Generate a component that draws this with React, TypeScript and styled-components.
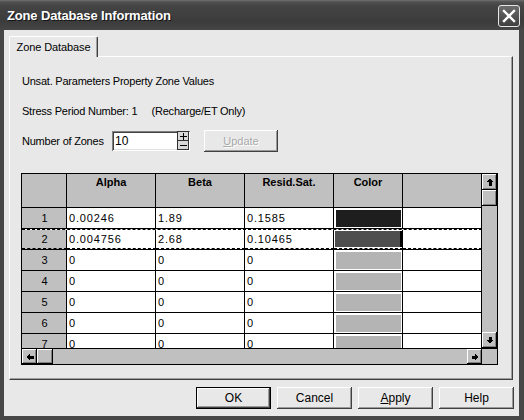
import React from "react";
import styled, { createGlobalStyle, css } from "styled-components";

const GlobalStyle = createGlobalStyle`
  html, body { margin: 0; padding: 0; background: #e8e8e8; }
  body { font-family: "Liberation Sans", Arial, sans-serif; font-size: 11px; color: #000; }
  * { box-sizing: border-box; }
`;

const Window = styled.div`
  width: 524px;
  height: 420px;
  display: flex;
  flex-direction: column;
  background: #e8e8e8;
  overflow: hidden;
`;

const TitleBar = styled.div`
  height: 30px;
  flex: none;
  display: flex;
  align-items: center;
  justify-content: space-between;
  padding: 0 4px 0 7px;
  background: linear-gradient(#707070 0, #505050 2px, #444 6px, #3c3c3c 22px, #464646 30px);
`;

const Title = styled.div`
  color: #fff;
  font-family: "Liberation Sans", Arial, sans-serif;
  font-weight: bold;
  font-size: 13px;
  letter-spacing: -0.15px;
  text-shadow: 1px 1px 0 #151515;
  margin-top: 1px;
`;

const CloseButton = styled.div`
  width: 22px;
  height: 22px;
  border: 1px solid #e6e6e6;
  border-radius: 3px;
  background: linear-gradient(#6c6c6c, #3e3e3e);
  display: flex;
  align-items: center;
  justify-content: center;
  margin-top: 2px;
`;

const Body = styled.div`
  flex: 1;
  display: flex;
  flex-direction: column;
  border-left: 4px solid #474747;
  border-right: 5px solid #474747;
  border-bottom: 4px solid #474747;
  padding: 6px 5px 0 5px;
`;

const TabStrip = styled.div`
  display: flex;
  height: 21px;
  position: relative;
  z-index: 1;
  margin-bottom: -1px;
`;

const Tab = styled.div`
  width: 89px;
  height: 21px;
  display: flex;
  align-items: center;
  justify-content: center;
  padding-bottom: 1px;
  background: #e8e8e8;
  border-top: 1px solid #fff;
  border-left: 1px solid #fff;
  border-right: 1px solid #404040;
  box-shadow: inset -1px 0 #a0a0a0;
  border-radius: 2px 2px 0 0;
  letter-spacing: -0.1px;
`;

const Panel = styled.div`
  width: 504px;
  height: 324px;
  border-top: 1px solid #fff;
  border-left: 1px solid #fff;
  border-right: 1px solid #404040;
  border-bottom: 1px solid #404040;
  box-shadow: inset -1px -1px #a0a0a0;
  padding: 18px 11px 0 11px;
  display: flex;
  flex-direction: column;
`;

const Line = styled.div<{ $gap: number }>`
  line-height: 13px;
  height: 13px;
  margin-top: ${(p) => p.$gap}px;
  padding-left: 1px;
  white-space: pre;
  letter-spacing: -0.22px;
`;

const ControlRow = styled.div`
  display: flex;
  align-items: center;
  height: 22px;
  margin-top: 12px;
`;

const Label = styled.div`
  width: 91px;
  padding-left: 1px;
  letter-spacing: -0.22px;
`;

const SpinBox = styled.div`
  width: 78px;
  height: 20px;
  background: #fff;
  display: flex;
  align-items: center;
  box-shadow: inset 1px 1px #808080, inset -1px -1px #fff, inset 2px 2px #404040, inset -2px -2px #e0e0e0;
  padding: 2px 1px 2px 3px;
`;

const SpinValue = styled.div`
  flex: 1;
  font-size: 12px;
`;

const SpinButtons = styled.div`
  display: flex;
  flex-direction: column;
  width: 12px;
  height: 19px;
  margin-top: -1px;
`;

const SpinBtn = styled.div`
  flex: 1;
  background: #d8d8d8;
  border: 1px solid #303030;
  display: flex;
  align-items: center;
  justify-content: center;
  & + & { border-top: none; }
`;

const raised = css`
  box-shadow: inset -1px -1px #404040, inset 1px 1px #fff, inset -2px -2px #9a9a9a;
`;

const UpdateButton = styled.div`
  width: 74px;
  height: 22px;
  margin-left: 14px;
  display: flex;
  align-items: center;
  justify-content: center;
  color: #a8a8a8;
  text-shadow: 1px 1px 0 #fff;
  background: #e8e8e8;
  ${raised}
  u { text-decoration: underline; }
`;

const GridFrame = styled.div`
  margin-top: 21px;
  width: 477px;
  height: 192px;
  border: 1px solid #000;
  display: grid;
  grid-template-columns: 460px 15px;
  grid-template-rows: 174px 16px;
  background: #c0c0c0;
`;

const Cells = styled.div`
  overflow: hidden;
  background: #fff;
`;

const HeaderRow = styled.div`
  display: flex;
  height: 34px;
  border-bottom: 1px solid #000;
  background: #c0c0c0;
`;

const HeadCell = styled.div<{ $w: number }>`
  width: ${(p) => p.$w}px;
  flex: none;
  border-right: 1px solid #000;
  font-weight: bold;
  text-align: center;
  padding-top: 2px;
  line-height: 13px;
`;

const DataRow = styled.div<{ $focused?: boolean }>`
  display: flex;
  height: 21px;
  border-bottom: 1px solid #000;
  background: #fff;
  ${(p) => p.$focused && css`border-top: 1px dashed #000;`}
`;

const Cell = styled.div<{ $w: number; $head?: boolean; $focused?: boolean }>`
  width: ${(p) => p.$w}px;
  flex: none;
  border-right: 1px solid #000;
  display: flex;
  align-items: center;
  padding-left: 2px;
  font-size: 11px;
  letter-spacing: 0.85px;
  background: ${(p) => (p.$head ? "#c0c0c0" : "#fff")};
  ${(p) => p.$head && css`justify-content: center; padding-left: 1px; letter-spacing: 0;`}
  ${(p) => p.$focused && css`border-bottom: 1px dashed #000;`}
`;

const ColorCell = styled.div<{ $w: number; $focused?: boolean }>`
  width: ${(p) => p.$w}px;
  flex: none;
  border-right: 1px solid #000;
  background: #fff;
  padding: 2px 1px 1px 2px;
  display: flex;
  ${(p) => p.$focused && css`border-bottom: 1px dashed #000; padding: 1px 0 1px 1px;`}
`;

const Swatch = styled.div<{ $c: string; $sel?: boolean }>`
  flex: 1;
  background: ${(p) => p.$c};
  ${(p) => p.$sel && css`border-right: 2px solid #000;`}
`;

const VScroll = styled.div`
  display: flex;
  flex-direction: column;
  justify-content: space-between;
  background: #c0c0c0;
`;

const HScroll = styled.div`
  display: flex;
  background: #c0c0c0;
  border-top: 1px solid #000;
`;

const Corner = styled.div`
  background: #c0c0c0;
  border-top: 1px solid #000;
`;

const SBtn = styled.div<{ $h?: number; $w?: number }>`
  width: ${(p) => p.$w ?? 15}px;
  height: ${(p) => p.$h ?? 16}px;
  flex: none;
  background: #c0c0c0;
  display: flex;
  align-items: center;
  justify-content: center;
  box-shadow: inset -1px -1px #000, inset 1px 1px #fff, inset -2px -2px #808080;
`;

const Spacer = styled.div`
  flex: 1;
`;

const VTop = styled.div`
  display: flex;
  flex-direction: column;
`;

const ButtonRow = styled.div`
  display: flex;
  justify-content: flex-end;
  gap: 6px;
  margin-top: 7px;
`;

const DlgButton = styled.div<{ $default?: boolean }>`
  width: 75px;
  height: 22px;
  display: flex;
  align-items: center;
  justify-content: center;
  background: #e8e8e8;
  font-size: 12px;
  ${raised}
  ${(p) =>
    p.$default &&
    css`
      box-shadow: inset 0 0 0 1px #000, inset -2px -2px #404040, inset 2px 2px #fff, inset -3px -3px #9a9a9a;
    `}
  u { text-decoration: underline; }
`;

const Arrow = ({ dir }: { dir: "up" | "down" | "left" | "right" }) => {
  const rot = { up: 0, right: 90, down: 180, left: 270 }[dir];
  return (
    <svg width="8" height="8" viewBox="0 0 8 8" shapeRendering="crispEdges">
      <g transform={`rotate(${rot} 4 4)`}>
        <polygon points="4,0.5 7.5,4 5.5,4 5.5,7.5 2.5,7.5 2.5,4 0.5,4" fill="#000" />
      </g>
    </svg>
  );
};

const cols = [45, 89, 89, 89, 69, 79];
const headers = ["", "Alpha", "Beta", "Resid.Sat.", "Color", ""];
const rows: [string, string, string, string, string][] = [
  ["1", "0.00246", "1.89", "0.1585", "#1e1e1e"],
  ["2", "0.004756", "2.68", "0.10465", "#4e4e4e"],
  ["3", "0", "0", "0", "#b4b4b4"],
  ["4", "0", "0", "0", "#b4b4b4"],
  ["5", "0", "0", "0", "#b4b4b4"],
  ["6", "0", "0", "0", "#b4b4b4"],
  ["7", "0", "0", "0", "#b4b4b4"],
];

export default function App() {
  return (
    <>
      <GlobalStyle />
      <Window>
        <TitleBar>
          <Title>Zone Database Information</Title>
          <CloseButton>
            <svg width="14" height="14" viewBox="0 0 14 14">
              <path d="M2 2 L12 12 M12 2 L2 12" stroke="#fff" strokeWidth="2.4" strokeLinecap="square" />
            </svg>
          </CloseButton>
        </TitleBar>
        <Body>
          <TabStrip>
            <Tab>Zone Database</Tab>
          </TabStrip>
          <Panel>
            <Line $gap={0}>Unsat. Parameters Property Zone Values</Line>
            <Line $gap={17}>{"Stress Period Number: 1     (Recharge/ET Only)"}</Line>
            <ControlRow>
              <Label>Number of Zones</Label>
              <SpinBox>
                <SpinValue>10</SpinValue>
                <SpinButtons>
                  <SpinBtn>
                    <svg width="7" height="7" viewBox="0 0 7 7" shapeRendering="crispEdges">
                      <path d="M0 3h7v1H0zM3 0h1v7H3z" fill="#000" />
                    </svg>
                  </SpinBtn>
                  <SpinBtn>
                    <svg width="7" height="7" viewBox="0 0 7 7" shapeRendering="crispEdges">
                      <path d="M0 3h7v1H0z" fill="#000" />
                    </svg>
                  </SpinBtn>
                </SpinButtons>
              </SpinBox>
              <UpdateButton>
                <span>
                  <u>U</u>pdate
                </span>
              </UpdateButton>
            </ControlRow>
            <GridFrame>
              <Cells>
                <HeaderRow>
                  {headers.map((h, i) => (
                    <HeadCell key={i} $w={cols[i]}>
                      {h}
                    </HeadCell>
                  ))}
                </HeaderRow>
                {rows.map((r, ri) => {
                  const f = ri === 1;
                  return (
                    <DataRow key={ri} $focused={f}>
                      <Cell $w={cols[0]} $head $focused={f}>
                        {r[0]}
                      </Cell>
                      <Cell $w={cols[1]} $focused={f}>{r[1]}</Cell>
                      <Cell $w={cols[2]} $focused={f}>{r[2]}</Cell>
                      <Cell $w={cols[3]} $focused={f}>{r[3]}</Cell>
                      <ColorCell $w={cols[4]} $focused={f}>
                        <Swatch $c={r[4]} $sel={f} />
                      </ColorCell>
                      <Cell $w={cols[5]} $focused={f} />
                    </DataRow>
                  );
                })}
              </Cells>
              <VScroll>
                <VTop>
                  <SBtn>
                    <Arrow dir="up" />
                  </SBtn>
                  <SBtn />
                </VTop>
                <SBtn>
                  <Arrow dir="down" />
                </SBtn>
              </VScroll>
              <HScroll>
                <SBtn $h={15}>
                  <Arrow dir="left" />
                </SBtn>
                <SBtn $h={15} $w={16} />
                <Spacer />
                <SBtn $h={15}>
                  <Arrow dir="right" />
                </SBtn>
              </HScroll>
              <Corner />
            </GridFrame>
          </Panel>
          <ButtonRow>
            <DlgButton $default>OK</DlgButton>
            <DlgButton>Cancel</DlgButton>
            <DlgButton>
              <span>
                <u>A</u>pply
              </span>
            </DlgButton>
            <DlgButton>Help</DlgButton>
          </ButtonRow>
        </Body>
      </Window>
    </>
  );
}
